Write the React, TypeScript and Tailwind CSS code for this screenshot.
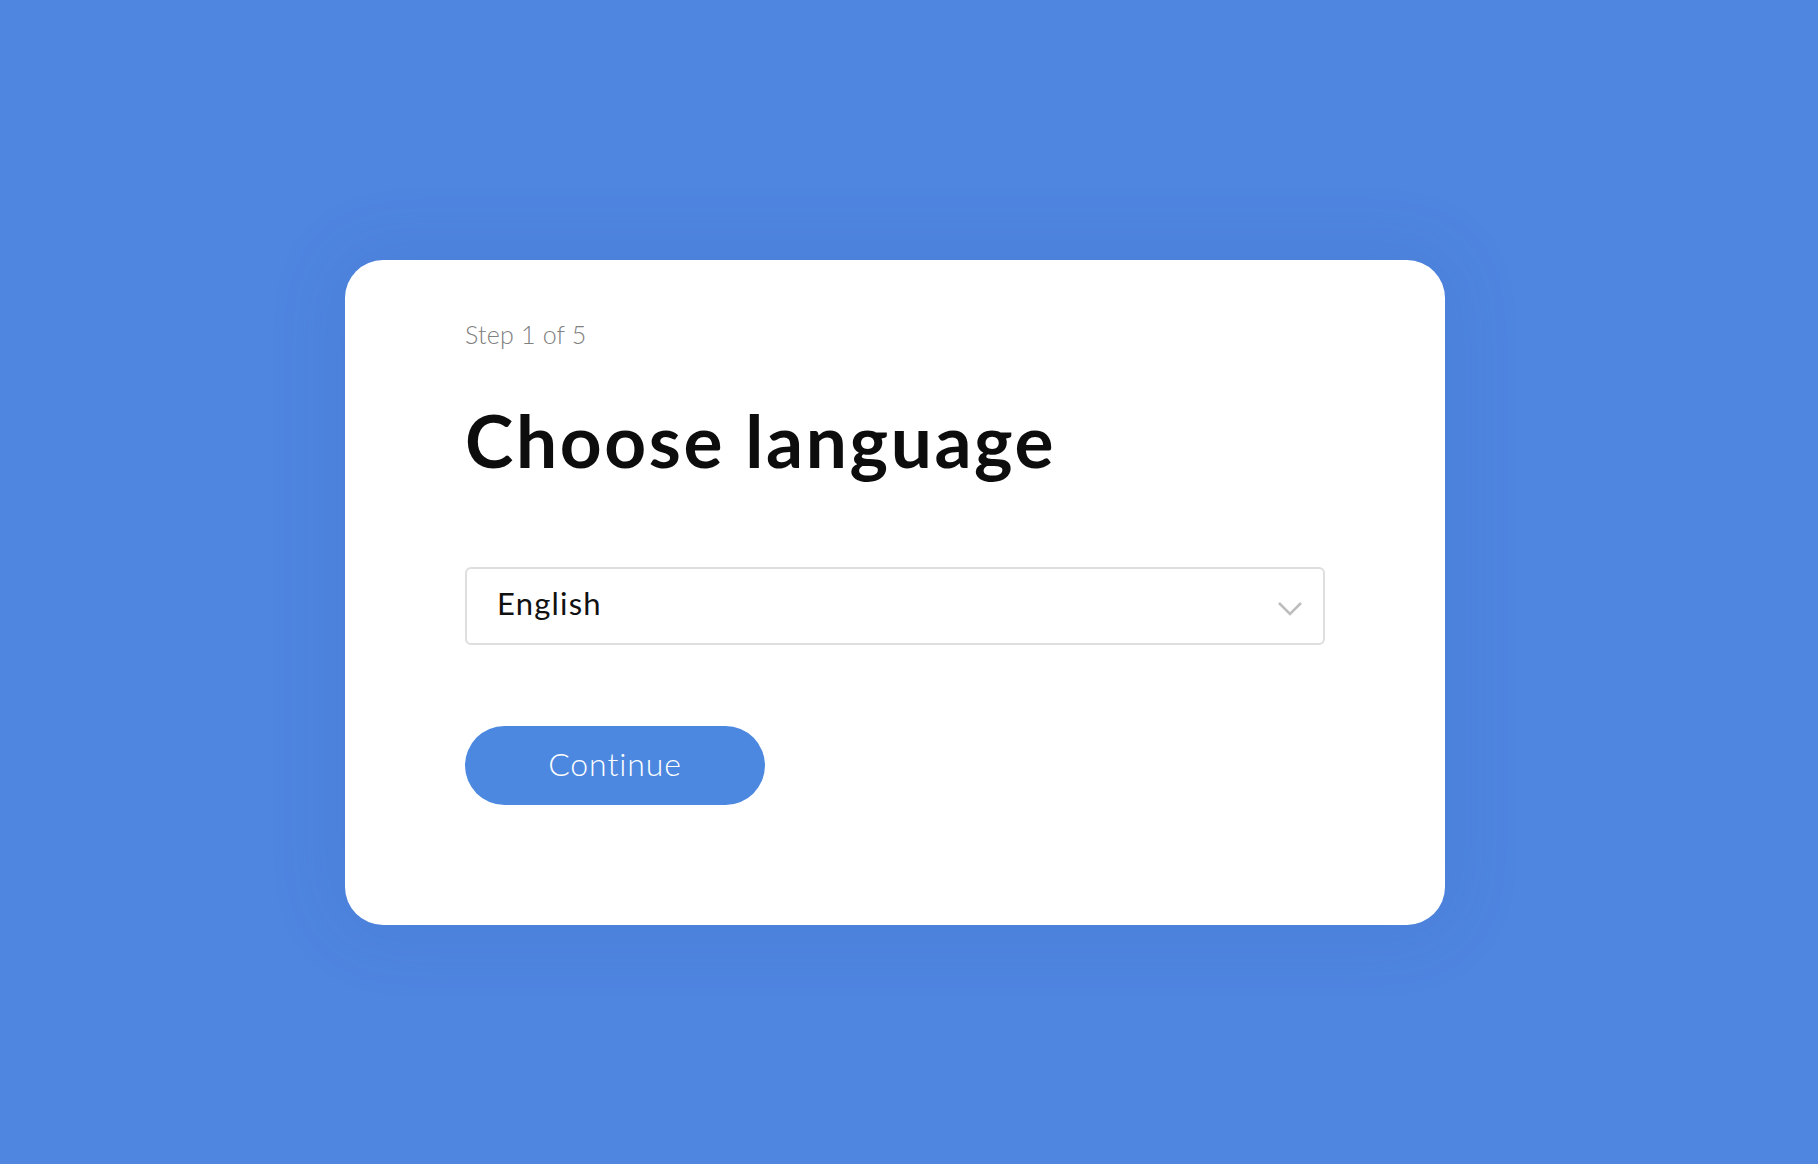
import { useState } from "react";

const languages = ["English", "Deutsch", "Español", "Français", "Italiano"];

const App = () => {
    const [language, setLanguage] = useState<string>("English");

    return (
        <div className="min-h-screen w-full bg-[#4f86e0] pt-[260px] pl-[345px] font-['Lato','Open_Sans',sans-serif]">
            <div className="w-[1100px] h-[665px] rounded-[38px] bg-white px-[120px] pt-[58px] shadow-[0_0_70px_10px_rgba(40,70,160,0.12)]">
                <p className="text-[25px] leading-[32px] font-light tracking-[0.2px] text-[#808080]">Step 1 of 5</p>
                <h1 className="mt-[54px] text-[73px] leading-[72px] font-bold text-[#0d0d0d] tracking-[2.6px]">
                    Choose language
                </h1>
                <div className="relative mt-[91px] h-[78px]">
                    <select
                        className="h-full w-full appearance-none rounded-[6px] border-2 border-[#dedede] bg-white pl-[30px] pb-[6px] text-[31px] tracking-[1.2px] text-[#111] focus:outline-none"
                        value={language}
                        onChange={(e) => setLanguage(e.target.value)}
                    >
                        {languages.map((l) => (
                            <option key={l} value={l}>
                                {l}
                            </option>
                        ))}
                    </select>
                    <svg
                        className="pointer-events-none absolute right-[22px] top-[34px]"
                        width="26"
                        height="15"
                        viewBox="0 0 26 15"
                        fill="none"
                    >
                        <path d="M2 2l11 11L24 2" stroke="#bdbdbd" strokeWidth="2.5" />
                    </svg>
                </div>
                <button className="mt-[81px] h-[79px] w-[300px] rounded-full bg-[#4c88e0] pb-[4px] text-[32px] font-light tracking-[0.9px] text-white">
                    Continue
                </button>
            </div>
        </div>
    );
};

export default App;
